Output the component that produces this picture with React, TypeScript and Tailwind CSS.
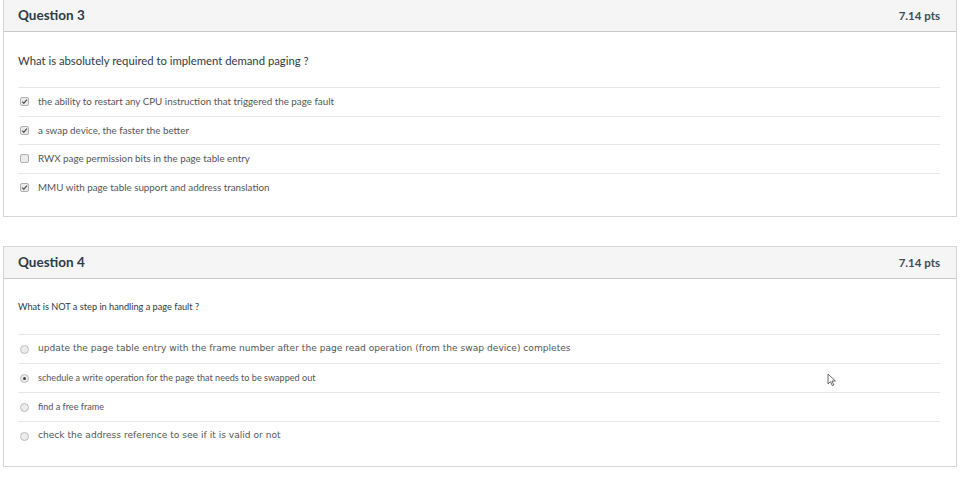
import React from "react";

const lato = { fontFamily: "Lato, 'Open Sans', sans-serif" };

function Check({ checked }: { checked: boolean }) {
  return (
    <span className="flex h-[9px] w-[9px] shrink-0 items-center justify-center rounded-[2px] border border-[#b0b0b0] bg-[#ececec]">
      {checked && (
        <svg width="7" height="7" viewBox="0 0 8 8">
          <path d="M1.3 4.2 L3.2 6 L6.8 1.8" fill="none" stroke="#555" strokeWidth="1.4" />
        </svg>
      )}
    </span>
  );
}

function Radio({ checked }: { checked: boolean }) {
  return (
    <span className="flex h-[9px] w-[9px] shrink-0 items-center justify-center rounded-full border border-[#bdbdbd] bg-[#ececec]">
      {checked && <span className="h-[3px] w-[3px] rounded-full bg-[#444]" />}
    </span>
  );
}

type Opt = { text: string; checked: boolean; font: "lato" | "latoSm" | "dejavu" };

function Row({ opt, kind }: { opt: Opt; kind: "check" | "radio" }) {
  const cls =
    opt.font === "lato"
      ? "text-[9.8px] text-[#555] [font-family:Lato,sans-serif]"
      : opt.font === "latoSm"
      ? "text-[9.1px] text-[#555] [font-family:Lato,sans-serif]"
      : "text-[9.1px] text-[#555] [font-family:'DejaVu_Sans',Verdana,sans-serif]";
  return (
    <div
      className={`flex items-center gap-[9px] border-t border-[#e6e6e6] pl-[2px] ${
        kind === "check" ? "h-[28.5px]" : "h-[29px]"
      }`}
    >
      {kind === "check" ? <Check checked={opt.checked} /> : <Radio checked={opt.checked} />}
      <span className={cls}>{opt.text}</span>
    </div>
  );
}

function Card({
  title,
  question,
  qClass,
  options,
  kind,
  qPad,
  bodyPad,
}: {
  title: string;
  question: string;
  qClass: string;
  options: Opt[];
  kind: "check" | "radio";
  qPad: string;
  bodyPad: string;
}) {
  return (
    <div className="border border-[#d4d6d8] bg-white" style={lato}>
      <div className="flex h-[32px] items-center justify-between border-b border-[#c5c9cc] bg-[#f5f5f5] pl-[14px] pr-[16px]">
        <span className="text-[13.5px] font-bold text-[#2d3b45]">{title}</span>
        <span className="text-[11.5px] font-bold text-[#3d4b55]">7.14 pts</span>
      </div>
      <div className={`px-[14px] ${bodyPad}`}>
        <div className={`${qPad} ${qClass} text-[#2d3b45]`}>{question}</div>
        <div className="mr-[2px]">
          {options.map((o, i) => (
            <Row key={i} opt={o} kind={kind} />
          ))}
        </div>
      </div>
    </div>
  );
}

export default function App() {
  return (
    <div className="relative h-[489px] w-[960px] overflow-hidden bg-white px-[3px]">
      <div className="-mt-[1px]">
        <Card
          title="Question 3"
          question="What is absolutely required to implement demand paging ?"
          qClass="text-[11.3px] leading-[16px]"
          qPad="pt-[21px] pb-[18px]"
          bodyPad="pb-[15px]"
          kind="check"
          options={[
            { text: "the ability to restart any CPU instruction that triggered the page fault", checked: true, font: "lato" },
            { text: "a swap device, the faster the better", checked: true, font: "lato" },
            { text: "RWX page permission bits in the page table entry", checked: false, font: "lato" },
            { text: "MMU with page table support and address translation", checked: true, font: "lato" },
          ]}
        />
      </div>
      <div className="mt-[29px]">
        <Card
          title="Question 4"
          question="What is NOT a step in handling a page fault ?"
          qClass="text-[9.2px] leading-[12px]"
          qPad="pt-[22px] pb-[21px]"
          bodyPad="pb-[16px]"
          kind="radio"
          options={[
            {
              text: "update the page table entry with the frame number after the page read operation (from the swap device) completes",
              checked: false,
              font: "dejavu",
            },
            { text: "schedule a write operation for the page that needs to be swapped out", checked: true, font: "latoSm" },
            { text: "find a free frame", checked: false, font: "latoSm" },
            { text: "check the address reference to see if it is valid or not", checked: false, font: "dejavu" },
          ]}
        />
      </div>
      <svg className="absolute left-[827px] top-[373px]" width="10" height="14" viewBox="0 0 10 14">
        <path d="M1 1 L1 11 L3.5 8.6 L5.3 12.6 L6.8 11.9 L5 8 L8.4 8 Z" fill="white" stroke="#555" strokeWidth="0.9" strokeLinejoin="round" />
      </svg>
    </div>
  );
}
